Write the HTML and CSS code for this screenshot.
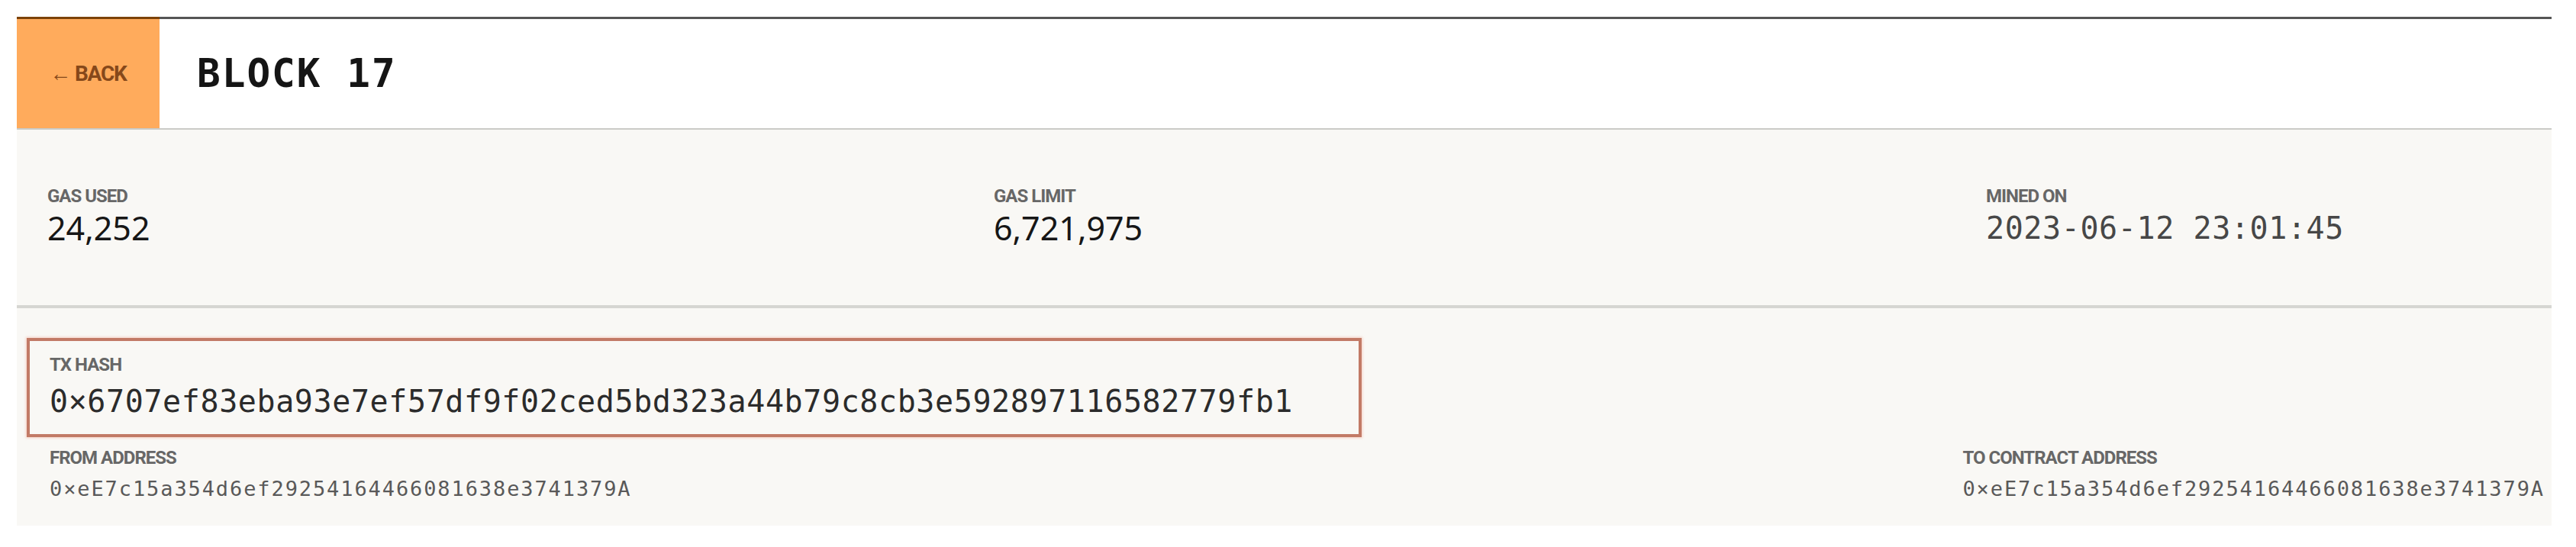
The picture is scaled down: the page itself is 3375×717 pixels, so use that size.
FILE: index.html
```html
<!DOCTYPE html>
<html lang="en">
<head>
<meta charset="utf-8">
<title>Block 17</title>
<link rel="stylesheet" href="styles.css">
</head>
<body>
<div class="page">
  <header class="topbar">
    <a class="back">← BACK</a>
    <div class="title-wrap"><h1 class="title">BLOCK 17</h1></div>
  </header>
  <section class="stats">
    <div class="stat">
      <div class="label">GAS USED</div>
      <div class="num">24,252</div>
    </div>
    <div class="stat">
      <div class="label">GAS LIMIT</div>
      <div class="num">6,721,975</div>
    </div>
    <div class="stat">
      <div class="label">MINED ON</div>
      <div class="date">2023-06-12 23:01:45</div>
    </div>
  </section>
  <section class="tx">
    <div class="hash-box">
      <div class="label">TX HASH</div>
      <div class="hash">0×6707ef83eba93e7ef57df9f02ced5bd323a44b79c8cb3e592897116582779fb1</div>
    </div>
    <div class="addr-row">
      <div class="addr">
        <div class="label">FROM ADDRESS</div>
        <div class="addr-val">0×eE7c15a354d6ef29254164466081638e3741379A</div>
      </div>
      <div class="addr">
        <div class="label">TO CONTRACT ADDRESS</div>
        <div class="addr-val">0×eE7c15a354d6ef29254164466081638e3741379A</div>
      </div>
    </div>
  </section>
</div>
</body>
</html>
```
FILE: styles.css
```css
html, body {
  margin: 0;
  padding: 0;
  background: #ffffff;
}

.page {
  margin: 22px 0 0 22px;
  width: 3321px;
}

.topbar {
  display: flex;
  height: 146px;
  background: #ffffff;
  border-bottom: 2px solid #cbcbc7;
}

.back {
  width: 187px;
  box-sizing: border-box;
  background: #ffab5c;
  border-top: 3px solid #7c4208;
  display: flex;
  align-items: center;
  justify-content: center;
  font-family: Roboto, "Liberation Sans", sans-serif;
  font-weight: 700;
  font-size: 28px;
  letter-spacing: -1.2px;
  color: #86481a;
  text-decoration: none;
}

.title-wrap {
  flex: 1;
  border-top: 3px solid #555555;
  display: flex;
  align-items: center;
  padding-left: 49px;
}

.title {
  margin: 0;
  font-family: "DejaVu Sans Mono", monospace;
  font-weight: 700;
  font-size: 51px;
  letter-spacing: 2px;
  color: #151515;
}

.stats {
  height: 234px;
  box-sizing: border-box;
  background: #f9f8f5;
  display: grid;
  grid-template-columns: 1240px 1300px 1fr;
  align-items: start;
  padding: 73px 0 0 40px;
  border-bottom: 4px solid #d6d6d2;
}

.label {
  font-family: Roboto, "Liberation Sans", sans-serif;
  font-weight: 700;
  font-size: 24px;
  line-height: 28px;
  letter-spacing: -1px;
  color: #676767;
}

.num {
  margin-top: 2px;
  font-family: "Noto Sans", sans-serif;
  font-weight: 400;
  font-size: 43px;
  line-height: 52px;
  color: #161616;
}

.date {
  margin-top: 2px;
  font-family: "DejaVu Sans Mono", monospace;
  font-size: 40px;
  line-height: 52px;
  letter-spacing: 0.6px;
  color: #474747;
}

.tx {
  background: #f9f8f5;
  padding: 39px 9px 33px 13px;
}

.hash-box {
  width: 1749px;
  box-sizing: border-box;
  border: 4px solid #c27a66;
  padding: 17px 26px 21px;
  box-shadow: 0 0 3px 1px rgba(245, 180, 160, 0.6);
}

.hash {
  margin-top: 12px;
  font-family: "DejaVu Sans Mono", monospace;
  font-size: 40px;
  line-height: 44px;
  letter-spacing: 0.6px;
  color: #2b2b2b;
  white-space: nowrap;
}

.addr-row {
  display: flex;
  justify-content: space-between;
  margin-top: 13px;
  padding-left: 30px;
}

.addr-val {
  margin-top: 12px;
  font-family: "DejaVu Sans Mono", monospace;
  font-size: 27px;
  line-height: 30px;
  letter-spacing: 1.9px;
  color: #595959;
  white-space: nowrap;
}
```
